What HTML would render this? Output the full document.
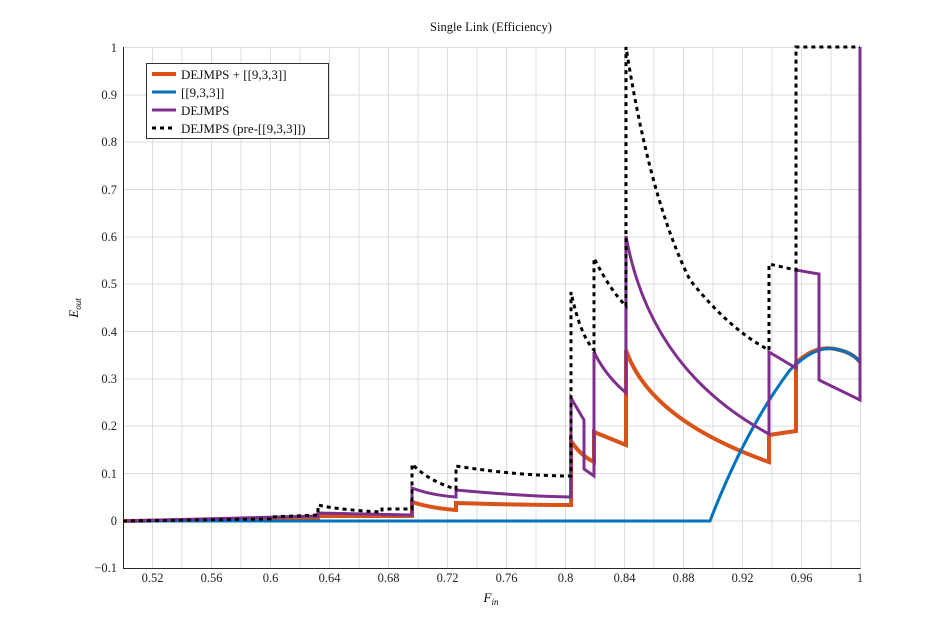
<!DOCTYPE html>
<html><head><meta charset="utf-8"><style>
body{margin:0;background:#fff;}
svg{display:block;font-family:"Liberation Serif",serif;}
</style></head><body>
<svg width="951" height="639" viewBox="0 0 951 639" xmlns="http://www.w3.org/2000/svg">
<rect width="951" height="639" fill="#fff"/>
<g stroke="#dcdcdc" stroke-width="1">
<path d="M152.5 47V568M182 47V568M211.5 47V568M241 47V568M270.5 47V568M300 47V568M329.5 47V568M359 47V568M388.5 47V568M418 47V568M447.5 47V568M477 47V568M506.5 47V568M536 47V568M565.5 47V568M595 47V568M624.5 47V568M654 47V568M683.5 47V568M713 47V568M742.5 47V568M772 47V568M801.5 47V568M831 47V568M860.5 47V568"/>
<path d="M123 47.5H860M123 95H860M123 142H860M123 189.5H860M123 237H860M123 284H860M123 331.5H860M123 379H860M123 426H860M123 473.5H860M123 521H860"/>
</g>
<path d="M123.5 47V568.5H860.5" fill="none" stroke="#262626" stroke-width="1"/>
<!-- orange -->
<path d="M123 521L318 518L318 516L412 516L412 502Q430 508 456 510L456 503Q520 505 571 505L571 441Q580 455 594 462L594 432L626 445L626 350Q650 420 769 462L769 435L796 431L796 363Q815 345 835 349Q852 352 860 362" fill="none" stroke="#d95319" stroke-width="4"/>
<!-- blue -->
<path d="M123 521H710 Q745 430 790 370 Q815 345 835 349 Q852 352 860 362" fill="none" stroke="#0072bd" stroke-width="3"/>
<!-- purple -->
<path d="M123 521L318 516L318 513L412 515L412 488Q430 495 456 497L456 490Q520 496 571 497L571 398L584 420L584 469L594 476L594 352Q605 375 626 393L626 236Q650 370 769 434L769 352L796 368L796 270L819 274L819 380L860 400L860 47" fill="none" stroke="#7e2f8e" stroke-width="3"/>
<!-- black dashed -->
<path d="M123 521L270 519L270 517L318 515L318 505Q340 510 382 512L382 509L412 509L412 464Q430 482 456 489L456 466Q520 476 571 476L571 292Q580 335 594 350L594 258Q610 290 626 306L626 47Q650 200 690 280Q730 330 769 350L769 264L796 270L796 47L860 47" fill="none" stroke="#000" stroke-width="3" stroke-dasharray="4 4"/>
<g font-size="12.5" fill="#222" text-anchor="end">
<text x="117" y="52">1</text><text x="117" y="99">0.9</text><text x="117" y="146">0.8</text><text x="117" y="194">0.7</text><text x="117" y="241">0.6</text><text x="117" y="288">0.5</text><text x="117" y="336">0.4</text><text x="117" y="383">0.3</text><text x="117" y="430">0.2</text><text x="117" y="478">0.1</text><text x="117" y="525">0</text><text x="117" y="572">−0.1</text>
</g>
<g font-size="12.5" fill="#222" text-anchor="middle">
<text x="152.5" y="582">0.52</text><text x="211.5" y="582">0.56</text><text x="270.5" y="582">0.6</text><text x="329.5" y="582">0.64</text><text x="388.5" y="582">0.68</text><text x="447.5" y="582">0.72</text><text x="506.5" y="582">0.76</text><text x="565.5" y="582">0.8</text><text x="624.5" y="582">0.84</text><text x="683.5" y="582">0.88</text><text x="742.5" y="582">0.92</text><text x="801.5" y="582">0.96</text><text x="860" y="582">1</text>
</g>
<text x="491" y="31" font-size="12.5" text-anchor="middle" fill="#111">Single Link (Efficiency)</text>
<text x="491" y="602" font-size="13" font-style="italic" text-anchor="middle">F<tspan font-size="9" dy="3">in</tspan></text>
<text transform="translate(78 308) rotate(-90)" font-size="13" font-style="italic" text-anchor="middle">E<tspan font-size="9" dy="3">out</tspan></text>
<rect x="146.5" y="63.5" width="182" height="75" fill="#fff" stroke="#333" stroke-width="1"/>
<path d="M152 74H176" stroke="#d95319" stroke-width="4"/>
<path d="M152 92H176" stroke="#0072bd" stroke-width="3"/>
<path d="M152 110H176" stroke="#7e2f8e" stroke-width="3"/>
<path d="M152 128H176" stroke="#000" stroke-width="3" stroke-dasharray="4 4"/>
<g font-size="13" fill="#111">
<text x="181" y="79">DEJMPS + [[9,3,3]]</text>
<text x="181" y="97">[[9,3,3]]</text>
<text x="181" y="115">DEJMPS</text>
<text x="181" y="133">DEJMPS (pre-[[9,3,3]])</text>
</g>
</svg>
</body></html>
